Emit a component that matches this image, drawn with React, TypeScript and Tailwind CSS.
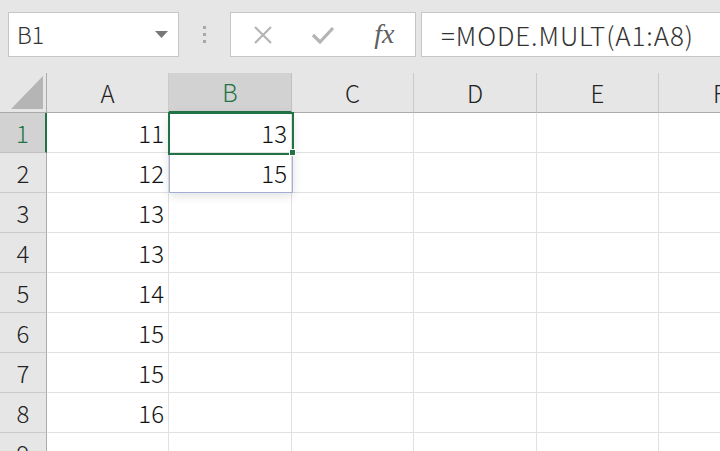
import React from 'react';

const cols = ['A', 'B', 'C', 'D', 'E', 'F'];
const rows = [1, 2, 3, 4, 5, 6, 7, 8, 9];
const colA: (number | null)[] = [11, 12, 13, 13, 14, 15, 15, 16, null];
const colB: (number | null)[] = [13, 15, null, null, null, null, null, null, null];

const font = { fontFamily: '"Noto Sans CJK JP", "Noto Sans", sans-serif' };

const Toolbar: React.FC = () => (
  <div className="h-[73px] bg-[#e6e6e6] relative flex items-start pt-[12px]">
    {/* Name box */}
    <div className="ml-[8px] w-[171px] h-[45px] bg-white border border-[#c6c6c6] flex items-center pl-[8px] pr-[10px]">
      <span className="text-[23px] font-light text-[#333] flex-1 leading-none">B1</span>
      <svg width="13" height="7" viewBox="0 0 13 7">
        <polygon points="0,0 13,0 6.5,7" fill="#777" />
      </svg>
    </div>
    {/* Grip dots */}
    <div className="w-[51px] h-[45px] flex flex-col items-center justify-center gap-[4px]">
      <div className="w-[3px] h-[3px] bg-[#a8a8a8]" />
      <div className="w-[3px] h-[3px] bg-[#a8a8a8]" />
      <div className="w-[3px] h-[3px] bg-[#a8a8a8]" />
    </div>
    {/* Cancel / Enter / fx */}
    <div className="w-[186px] h-[45px] bg-white border border-[#c6c6c6] flex items-center">
      <div className="w-[62px] flex justify-center pl-[2px]">
        <svg width="20" height="20" viewBox="0 0 20 20">
          <path d="M2 2 L18 18 M18 2 L2 18" stroke="#b4b4b4" strokeWidth="2.2" fill="none" />
        </svg>
      </div>
      <div className="w-[62px] flex justify-center">
        <svg width="24" height="20" viewBox="0 0 24 20">
          <path d="M2 10 L9 17 L22 3" stroke="#b4b4b4" strokeWidth="3.2" fill="none" />
        </svg>
      </div>
      <div className="w-[62px] flex justify-center">
        <span className="text-[28px] italic text-[#606060] leading-none pb-[2px]" style={{ fontFamily: '"Liberation Serif", serif' }}>
          fx
        </span>
      </div>
    </div>
    {/* Formula input */}
    <div className="ml-[5px] flex-1 h-[45px] bg-white border border-[#c6c6c6] border-r-0 flex items-center pl-[19px]">
      <span className="text-[26px] font-light text-[#333] leading-none tracking-[0.9px]">=MODE.MULT(A1:A8)</span>
    </div>
  </div>
);

const Grid: React.FC = () => (
  <div className="relative">
    <div className="grid grid-cols-[47px_122px_123px_122px_123px_122px_122px] auto-rows-[40px] font-light">
      {/* Corner */}
      <div className="bg-[#e6e6e6] border-r border-b border-[#ababab] flex items-end justify-end pr-[3px] pb-[3px]">
        <svg width="32" height="33" viewBox="0 0 32 33">
          <polygon points="32,0 32,33 0,33" fill="#b5b5b5" />
        </svg>
      </div>
      {cols.map((c) => (
        <div
          key={c}
          className={
            c === 'B'
              ? 'bg-[#d2d2d2] border-r border-[#c0c0c0] border-b-2 border-b-[#217346] flex items-center justify-center text-[24px] text-[#217346]'
              : 'bg-[#e6e6e6] border-r border-[#cacaca] border-b border-b-[#ababab] flex items-center justify-center text-[24px] text-[#222]'
          }
        >
          {c}
        </div>
      ))}
      {rows.map((r, i) => (
        <React.Fragment key={r}>
          <div
            className={
              r === 1
                ? 'bg-[#d2d2d2] border-r-2 border-r-[#217346] border-b border-[#c0c0c0] flex items-center justify-center text-[24px] text-[#217346]'
                : 'bg-[#e6e6e6] border-r border-r-[#ababab] border-b border-[#cacaca] flex items-center justify-center text-[24px] text-[#222]'
            }
          >
            {r}
          </div>
          <div className="bg-white border-r border-b border-[#e1e1e1] flex items-center justify-end pr-[4px] text-[24px] text-[#111]">
            {colA[i]}
          </div>
          <div className="bg-white border-r border-b border-[#e1e1e1] flex items-center justify-end pr-[4px] text-[24px] text-[#111]">
            {colB[i]}
          </div>
          {[0, 1, 2, 3].map((k) => (
            <div key={k} className="bg-white border-r border-b border-[#e1e1e1]" />
          ))}
        </React.Fragment>
      ))}
    </div>

    {/* Spill range border + shadow */}
    <div className="absolute left-[169px] top-[40px] w-[124px] h-[80px] border border-[#a4acd8] shadow-[0_3px_10px_rgba(0,0,0,0.12)] pointer-events-none" />
    {/* Active cell */}
    <div className="absolute left-[168px] top-[39px] w-[126px] h-[43px] border-2 border-[#217346] pointer-events-none" />
    {/* Fill handle */}
    <div className="absolute left-[289px] top-[76px] w-[7px] h-[7px] bg-[#217346] border border-white pointer-events-none" />
  </div>
);

export default function App() {
  return (
    <div className="w-[720px] h-[451px] overflow-hidden bg-white" style={font}>
      <Toolbar />
      <Grid />
    </div>
  );
}
